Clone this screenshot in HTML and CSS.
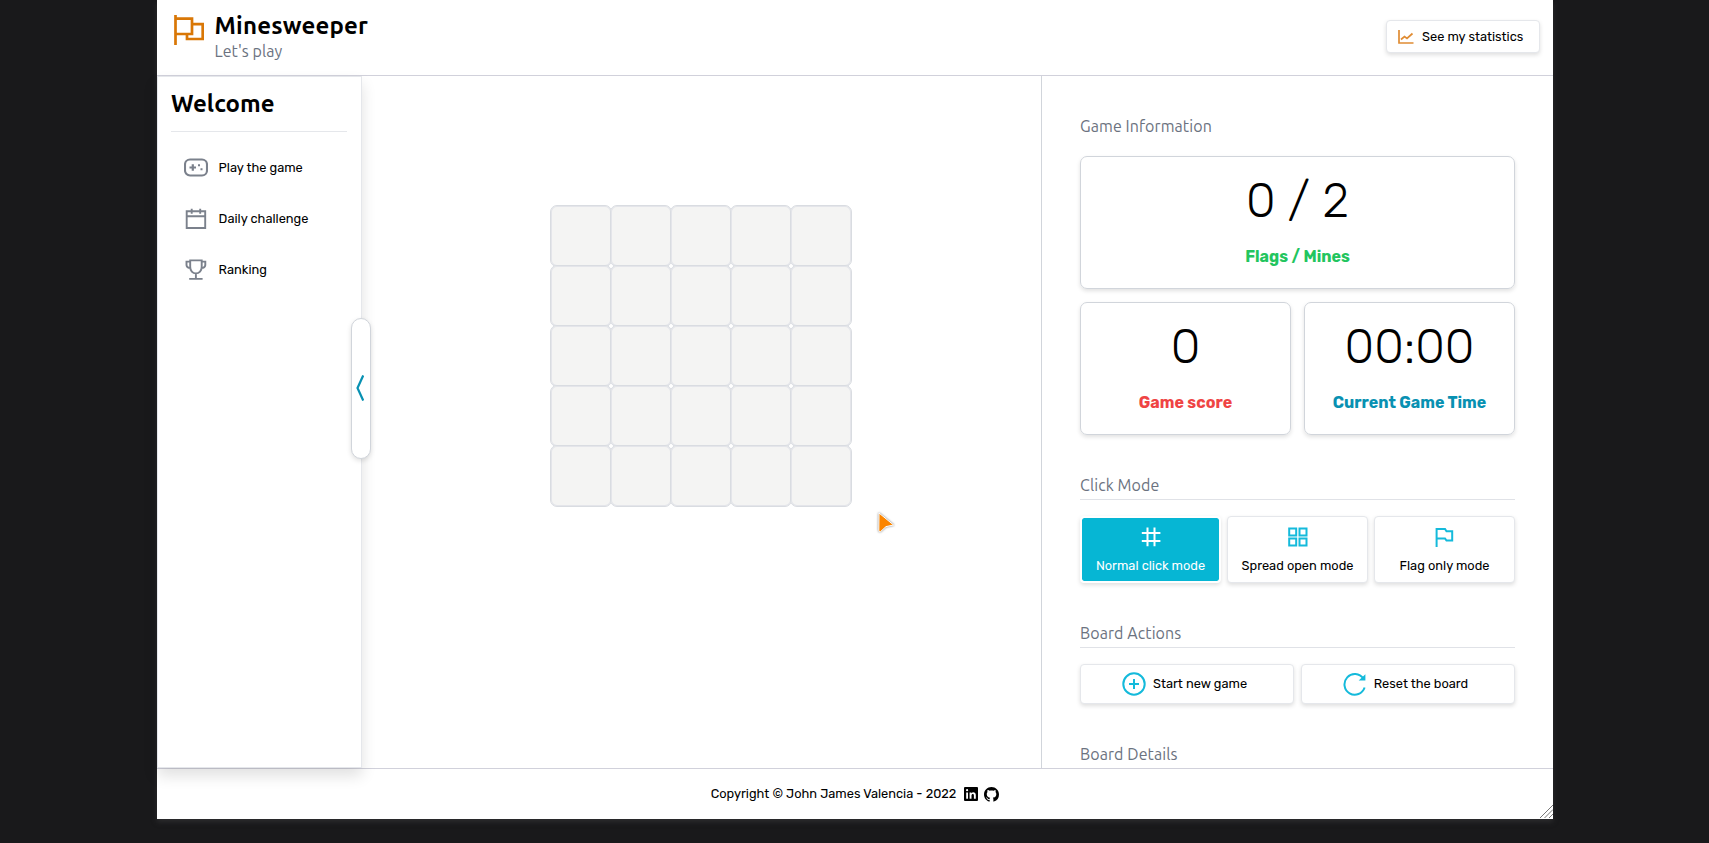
FILE: index.html
```
<!DOCTYPE html>
<html lang="en">
<head>
<meta charset="utf-8">
<title>Minesweeper</title>
<link rel="stylesheet" href="styles.css">
</head>
<body>
<div class="app">
  <header class="header">
    <div class="brand">
      <svg class="brand-icon" viewBox="0 0 30 30" width="30" height="30"><path d="M1.5 0V30M1.5 3.6H18V19H1.5M18 9.2H28.7V24H13V19"/></svg>
      <div>
        <h1 class="title">Minesweeper</h1>
        <p class="subtitle">Let's play</p>
      </div>
    </div>
    <button class="btn stats"><svg viewBox="0 0 16 14" width="16" height="14"><path d="M1 0V13H15.5M3 9.5L6.5 6.5L9 8.5L14.5 3.5"/></svg><span>See my statistics</span></button>
  </header>
  <main class="main">
    <aside class="sidebar">
      <h2 class="welcome">Welcome</h2>
      <nav class="nav">
        <a class="nav-item"><svg viewBox="0 0 24 24" width="24" height="24"><rect x="1" y="3.5" width="22" height="16" rx="5" stroke-width="2.1"/><path stroke-width="2.2" d="M5.5 11.5H12M8.8 8.3V14.7"/><path stroke-width="2" d="M14 9.3H16M16.5 13.3H18.5"/></svg><span>Play the game</span></a>
        <a class="nav-item"><svg viewBox="0 0 24 24" width="24" height="24"><path d="M2.7 4.2H21.2V21H2.7ZM2.7 9.2H21.2M7.7 1.7V6.7M16.2 1.7V6.7"/></svg><span>Daily challenge</span></a>
        <a class="nav-item"><svg viewBox="0 0 24 24" width="24" height="24"><path d="M6.2 2.4H17.7V9.1C17.7 12.6 15.2 15.4 11.9 15.4S6.2 12.6 6.2 9.1ZM6.2 3.6H2.5V7.1Q2.7 9.9 6.7 10.1M17.7 3.6H21.3V7.1Q21.1 9.9 17.2 10.1M11.9 15.6V20.9M5.2 20.9H18.6"/></svg><span>Ranking</span></a>
      </nav>
      <button class="handle"><svg viewBox="0 0 8 28" width="8" height="28"><path d="M7.2 1.5L1.5 14L7.2 26.5"/></svg></button>
    </aside>
    <section class="play">
      <div class="board">
        <i></i><i></i><i></i><i></i><i></i><i></i><i></i><i></i><i></i><i></i><i></i><i></i><i></i><i></i><i></i><i></i><i></i><i></i><i></i><i></i><i></i><i></i><i></i><i></i><i></i>
      </div>
    </section>
    <section class="panel">
      <h3 class="label info">Game Information</h3>
      <div class="cards">
        <div class="card wide"><div class="value">0 / 2</div><div class="name green">Flags / Mines</div></div>
        <div class="card"><div class="value">0</div><div class="name red">Game score</div></div>
        <div class="card"><div class="value">00:00</div><div class="name teal">Current Game Time</div></div>
      </div>
      <h3 class="label ruled">Click Mode</h3>
      <div class="modes">
        <button class="btn mode active"><svg viewBox="0 0 20 20" width="20" height="20"><path d="M6.5 .5V19.3M13.5 .5V19.3M.8 6H19.4M.8 14H19.4"/></svg><span>Normal click mode</span></button>
        <button class="btn mode"><svg viewBox="0 0 20 20" width="20" height="20"><path d="M1.2 1.5H8.2V8.5H1.2ZM11.5 1.5H18.5V8.5H11.5ZM1.2 11.6H8.2V18.6H1.2ZM11.5 11.6H18.5V18.6H11.5Z"/></svg><span>Spread open mode</span></button>
        <button class="btn mode"><svg viewBox="0 0 20 20" width="20" height="20"><path d="M1.6 20V2H10L11.5 4.3H17.2V13.6H11.5L10 11.5H1.6"/></svg><span>Flag only mode</span></button>
      </div>
      <h3 class="label ruled">Board Actions</h3>
      <div class="actions">
        <button class="btn action"><svg viewBox="0 0 24 24" width="24" height="24"><circle cx="12" cy="12" r="10.7"/><path d="M7 12H17M12 7V17"/></svg><span>Start new game</span></button>
        <button class="btn action"><svg viewBox="0 0 24 24" width="24" height="24"><path d="M21.6 15.5A10.3 10.3 0 1 1 20.3 6.6M21.4 4.6V7.6H18.2Z"/></svg><span>Reset the board</span></button>
      </div>
      <h3 class="label">Board Details</h3>
    </section>
  </main>
  <footer class="footer">
    <span class="copy">Copyright © John James Valencia - 2022</span>
    <svg class="linkedin" viewBox="0 0 14 14" width="14" height="14"><path fill-rule="evenodd" d="M1 0H13Q14 0 14 1V13Q14 14 13 14H1Q0 14 0 13V1Q0 0 1 0ZM2.2 5.4V11.8H4V5.4ZM2 3.2A1.1 1.1 0 1 0 4.2 3.2A1.1 1.1 0 1 0 2 3.2ZM5.6 5.4V11.8H7.5V8.6C7.5 6.4 9.9 6.6 9.9 8.4V11.8H11.8V7.9C11.8 5 8.6 4.6 7.4 6.3V5.4Z"/></svg>
    <svg class="github" viewBox="0 0 16 16" width="15" height="15"><path d="M8 0C3.58 0 0 3.58 0 8c0 3.54 2.29 6.53 5.47 7.59.4.07.55-.17.55-.38 0-.19-.01-.82-.01-1.49-2.01.37-2.53-.49-2.69-.94-.09-.23-.48-.94-.82-1.13-.28-.15-.68-.52-.01-.53.63-.01 1.08.58 1.23.82.72 1.21 1.87.87 2.33.66.07-.52.28-.87.51-1.07-1.78-.2-3.64-.89-3.64-3.95 0-.87.31-1.59.82-2.15-.08-.2-.36-1.02.08-2.12 0 0 .67-.21 2.2.82.64-.18 1.32-.27 2-.27s1.36.09 2 .27c1.53-1.04 2.2-.82 2.2-.82.44 1.1.16 1.92.08 2.12.51.56.82 1.27.82 2.15 0 3.07-1.87 3.75-3.65 3.95.29.25.54.73.54 1.48 0 1.07-.01 1.93-.01 2.2 0 .21.15.46.55.38A8.01 8.01 0 0 0 16 8c0-4.42-3.58-8-8-8z"/></svg>
    <svg class="grip" viewBox="0 0 13 13" width="13" height="13"><path d="M0 13L13 0M4.5 13L13 4.5M9 13L13 9"/></svg>
  </footer>
  <svg class="pointer" viewBox="0 0 18 21" width="18" height="21"><path d="M2 1L16.6 13L9 14.6L3.6 19.6Q1.8 20.2 1.8 18.2Z"/></svg>
</div>
</body>
</html>
```
FILE: styles.css
```
* { box-sizing: border-box; margin: 0; padding: 0; }
body { height: 843px; overflow: hidden; background: #19191b; color: #000; font: 12.8px/20px Rubik, Roboto, sans-serif; }
svg { display: block; flex: none; fill: none; }
button { font: inherit; color: inherit; }
.app { position: relative; width: 1396px; height: 819px; margin-left: 157px; display: flex; flex-direction: column; background: #fff; box-shadow: 0 3px 5px #2c2c2e; }

.header { height: 76px; flex: none; display: flex; justify-content: space-between; padding: 10px 13px 0 17px; border-bottom: 1px solid #d1d1db; }
.brand { display: flex; gap: 10.5px; }
.brand-icon { margin-top: 5px; stroke: #d97706; stroke-width: 2.7; }
.title, .welcome { font: bold 24px/32px Ubuntu, "Noto Sans", sans-serif; }
.title { letter-spacing: .2px; }
.subtitle { margin-top: -2px; font: 16px/22px Ubuntu, "Noto Sans", sans-serif; color: #6b7280; letter-spacing: .05px; }
.btn { background: #fff; border: 1px solid #e5e7eb; border-radius: 4px; box-shadow: 0 2px 4px rgba(0, 0, 0, .13); white-space: nowrap; }
.stats { width: 154px; height: 33px; margin-top: 10px; padding-left: 11px; display: flex; align-items: center; gap: 8px; }
.stats svg { stroke: #e08c33; stroke-width: 1.7; }

.main { height: 692px; flex: none; display: flex; }
.sidebar { position: relative; z-index: 2; width: 205px; padding: 10px 14px 0 13px; background: #fff; border: 1px solid #e5e7eb; box-shadow: 0 8px 14px rgba(0, 0, 0, .12); }
.welcome { height: 45px; border-bottom: 1px solid #e5e7eb; letter-spacing: .05px; padding-top: 1px; }
.nav { margin-top: 10px; }
.nav-item { height: 51px; padding-left: 13px; display: flex; align-items: center; gap: 10.6px; }
.nav-item svg { stroke: #7b818c; stroke-width: 1.9; }
.handle { position: absolute; left: 193px; top: 241px; width: 20px; height: 141px; display: flex; align-items: center; padding: 0 0 2px 4px; background: #fff; border: 1px solid #d1d5db; border-radius: 10px; box-shadow: 0 2px 5px rgba(0, 0, 0, .13); }
.handle svg { stroke: #0891b2; stroke-width: 2.2; }

.play { width: 679px; padding: 129px 0 0 188px; }
.board { display: grid; grid-template-columns: repeat(5, 60px); grid-auto-rows: 60px; }
.board i { width: 62px; height: 62px; background: #f4f4f3; border: 1px solid #d9dce1; border-radius: 7px; box-shadow: inset 0 0 0 1px #e4e5ea; }

.panel { width: 512px; padding: 38px 38px 0; border-left: 1px solid #d1d5db; overflow: hidden; }
.label { font: 16px/24px Ubuntu, "Noto Sans", sans-serif; color: #6b7280; letter-spacing: .08px; }
.ruled { height: 27px; border-bottom: 1px solid #e0e2e7; }
.cards { display: grid; grid-template-columns: 211px 211px; gap: 13px; margin: 18px 0 38px; }
.card { height: 133px; padding-top: 14px; text-align: center; border: 1px solid #d1d5db; border-radius: 7px; box-shadow: 0 2px 4px rgba(0, 0, 0, .12); }
.wide { grid-column: 1 / 3; }
.value { font-size: 48px; line-height: 60px; font-weight: 300; }
.name { margin-top: 14px; font-size: 16px; line-height: 24px; font-weight: 700; }
.green { color: #22c55e; }
.red { color: #ef4444; }
.teal { color: #0891b2; }
.modes { display: flex; gap: 6px; margin: 16px 0 38px; }
.mode { width: 141px; height: 67px; padding-top: 10px; display: flex; flex-direction: column; align-items: center; gap: 9px; }
.mode svg, .action svg { stroke: #14badb; stroke-width: 2; }
.active { border: 2px solid #fff; padding-top: 9px; background: #06b6d4; background-clip: padding-box; color: #fff; }
.active svg { stroke: #fff; }
.actions { display: flex; gap: 7px; margin: 16px 0 38px; }
.action { width: 214px; height: 40px; padding-right: 5px; display: flex; align-items: center; justify-content: center; gap: 7px; }

.footer { position: relative; height: 51px; display: flex; align-items: center; justify-content: center; border-top: 1px solid #d1d1db; }
.linkedin { margin: 0 6px 0 8px; fill: #000; }
.github { fill: #000; }
.grip { position: absolute; right: 0; bottom: 1px; stroke: #777; stroke-width: 1; }
.pointer { position: absolute; left: 720px; top: 512px; fill: #fb8500; stroke: #fff; stroke-width: 1; filter: drop-shadow(0 0 1px rgba(0, 0, 0, .5)); }
.mode svg { position: relative; }
.active .mode-icon, .active svg { stroke: #fff; }
```
